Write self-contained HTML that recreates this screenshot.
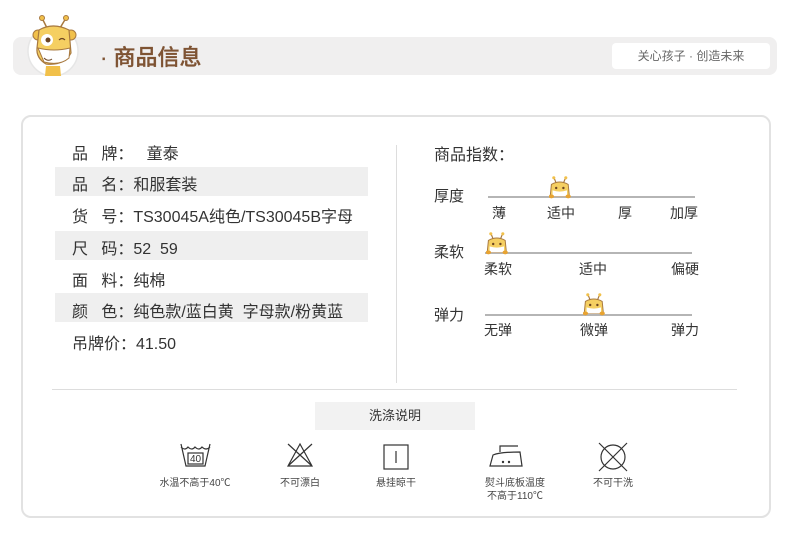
<!DOCTYPE html>
<html><head><meta charset="utf-8"><style>
*{margin:0;padding:0;box-sizing:border-box}
body{width:790px;height:556px;background:#fff;position:relative;font-family:"Liberation Sans","Noto Sans CJK SC",sans-serif;color:#333;overflow:hidden}
.a{position:absolute;white-space:nowrap}
.bar{left:13px;top:37px;width:764px;height:38px;background:#f0efef;border-radius:8px}
.pill{left:612px;top:43px;width:158px;height:26px;background:#fff;border-radius:4px;font-size:12px;color:#666;text-align:center;line-height:26px}
.card{left:21px;top:115px;width:750px;height:403px;border:2px solid #e2e2e2;border-radius:10px}
.row{left:55px;width:313px;height:29px;background:#efefef}
.t{font-size:16px;color:#333;left:72px}
.r{font-size:15px;color:#333}
.ln{height:2px;background:#b5b5b5}
.s{font-size:14px;color:#333}
.w{font-size:10px;color:#444;text-align:center;width:120px;line-height:13px}
</style></head><body>
<div class="a bar"></div>
<svg class="a" style="left:24px;top:8px" width="60" height="68" viewBox="0 0 60 68">
<circle cx="29" cy="43" r="25" fill="#fff" stroke="#e6e6e6" stroke-width="1.5"/>
<path d="M23 20 L18 10 M36 20 L42 10" stroke="#a8793f" stroke-width="1.5"/>
<circle cx="18" cy="10" r="2.5" fill="#f1c04a" stroke="#a8793f"/><circle cx="42" cy="10" r="2.5" fill="#f1c04a" stroke="#a8793f"/>
<circle cx="14" cy="27" r="5" fill="#f1c04a" stroke="#a8793f"/><circle cx="47" cy="27" r="5" fill="#f1c04a" stroke="#a8793f"/>
<path d="M15 22 Q29 14 45 22 L47 45 Q40 58 22 56 Q12 50 13 40Z" fill="#f5cf62" stroke="#a8793f" stroke-width="1.2"/>
<path d="M14 40 Q30 44 46 40 L45 50 Q36 58 20 54 Z" fill="#fff" stroke="#a8793f" stroke-width="1"/>
<circle cx="23" cy="32" r="6" fill="#fff"/><circle cx="24" cy="32" r="2.5" fill="#6b4422"/>
<path d="M35 32 Q38 29 41 32" stroke="#6b4422" fill="none" stroke-width="1.2"/>
<path d="M20 50 Q24 54 28 51" stroke="#6b4422" fill="none"/>
<path d="M22 58 L36 58 L37 68 L21 68Z" fill="#f1c04a"/>
</svg>
<div class="a" style="left:100px;top:40px;font-size:22px;color:#7e5333;font-weight:500;-webkit-text-stroke:0.3px #7e5333">·&nbsp;商品信息</div>
<div class="a pill">关心孩子 · 创造未来</div>
<div class="a card"></div>
<div class="a row" style="top:167px"></div>
<div class="a row" style="top:231px"></div>
<div class="a row" style="top:293px"></div>
<div class="a t" style="top:140px">品&nbsp;&nbsp;&nbsp;牌：&nbsp;&nbsp;&nbsp;童泰</div>
<div class="a t" style="top:171px">品&nbsp;&nbsp;&nbsp;名：和服套装</div>
<div class="a t" style="top:203px">货&nbsp;&nbsp;&nbsp;号：TS30045A纯色/TS30045B字母</div>
<div class="a t" style="top:235px">尺&nbsp;&nbsp;&nbsp;码：52&nbsp;&nbsp;59</div>
<div class="a t" style="top:267px">面&nbsp;&nbsp;&nbsp;料：纯棉</div>
<div class="a t" style="top:298px">颜&nbsp;&nbsp;&nbsp;色：纯色款/蓝白黄&nbsp;&nbsp;字母款/粉黄蓝</div>
<div class="a t" style="top:330px">吊牌价：41.50</div>
<div class="a" style="left:396px;top:145px;width:1px;height:238px;background:#ddd"></div>
<div class="a" style="left:52px;top:389px;width:685px;height:1px;background:#ddd"></div>
<div class="a" style="left:434px;top:141px;font-size:16px">商品指数：</div>
<div class="a r" style="left:434px;top:185px">厚度</div>
<div class="a ln" style="left:488px;top:196px;width:207px"></div>
<div class="a s" style="left:492px;top:203px">薄</div><div class="a s" style="left:547px;top:203px">适中</div><div class="a s" style="left:618px;top:203px">厚</div><div class="a s" style="left:670px;top:203px">加厚</div>
<div class="a r" style="left:434px;top:241px">柔软</div>
<div class="a ln" style="left:485px;top:252px;width:207px"></div>
<div class="a s" style="left:484px;top:259px">柔软</div><div class="a s" style="left:579px;top:259px">适中</div><div class="a s" style="left:671px;top:259px">偏硬</div>
<div class="a r" style="left:434px;top:304px">弹力</div>
<div class="a ln" style="left:485px;top:314px;width:207px"></div>
<div class="a s" style="left:484px;top:320px">无弹</div><div class="a s" style="left:580px;top:320px">微弹</div><div class="a s" style="left:671px;top:320px">弹力</div>
<svg width="0" height="0" style="position:absolute"><defs><g id="g">
<path d="M6 6 L4 1 M12 6 L14 1" stroke="#a8793f" stroke-width="1"/>
<circle cx="4" cy="1.5" r="1.3" fill="#f1c04a"/><circle cx="14" cy="1.5" r="1.3" fill="#f1c04a"/>
<path d="M2 7 Q9 3 16 7 L17 17 L1 17Z" fill="#f5cf62" stroke="#a8793f" stroke-width=".8"/>
<path d="M3 12 Q9 14 15 12 L15 17 L3 17Z" fill="#fff"/>
<circle cx="6" cy="10" r="1" fill="#6b4422"/><circle cx="12" cy="10" r="1" fill="#6b4422"/>
<ellipse cx="2" cy="17" rx="2.2" ry="1.6" fill="#e8a331"/><ellipse cx="16" cy="17" rx="2.2" ry="1.6" fill="#e8a331"/>
</g></defs></svg>
<svg class="a" style="left:549px;top:176px" width="24" height="24" viewBox="0 0 20 20"><use href="#g"/></svg>
<svg class="a" style="left:486px;top:232px" width="24" height="24" viewBox="0 0 20 20"><use href="#g"/></svg>
<svg class="a" style="left:583px;top:293px" width="24" height="24" viewBox="0 0 20 20"><use href="#g"/></svg>
<div class="a" style="left:315px;top:402px;width:160px;height:28px;background:#f2f2f2;font-size:13px;text-align:center;line-height:28px;color:#333">洗涤说明</div>
<svg class="a" style="left:140px;top:440px" width="520" height="36" fill="none" stroke="#333" stroke-width="1.2">
<path d="M41 4 L46 26 L65 26 L70 4 M41 7 Q45 11 48 7 Q52 11 55 7 Q59 11 62 7 Q66 11 70 7"/>
<text x="55.5" y="22" font-size="10" fill="#333" stroke="none" text-anchor="middle" font-family="Liberation Sans">40</text>
<rect x="48" y="13" width="15" height="11"/>
<path d="M160 4 L148 26 L172 26 Z M148 4 L172 26 M172 4 L148 26"/>
<rect x="244" y="5" width="24" height="24"/><path d="M256 11 V23"/>
<path d="M350 26 L353 15 Q360 12 380 12 L382 26 Z M360 12 V6 L378 6"/><circle cx="363" cy="22" r=".6" fill="#333"/><circle cx="369" cy="22" r=".6" fill="#333"/>
<circle cx="473" cy="17" r="12"/><path d="M459 3 L487 31 M487 3 L459 31"/>
</svg>
<div class="a w" style="left:135px;top:477px">水温不高于40℃</div>
<div class="a w" style="left:240px;top:477px">不可漂白</div>
<div class="a w" style="left:336px;top:477px">悬挂晾干</div>
<div class="a w" style="left:455px;top:477px">熨斗底板温度<br>不高于110℃</div>
<div class="a w" style="left:553px;top:477px">不可干洗</div>
</body></html>
